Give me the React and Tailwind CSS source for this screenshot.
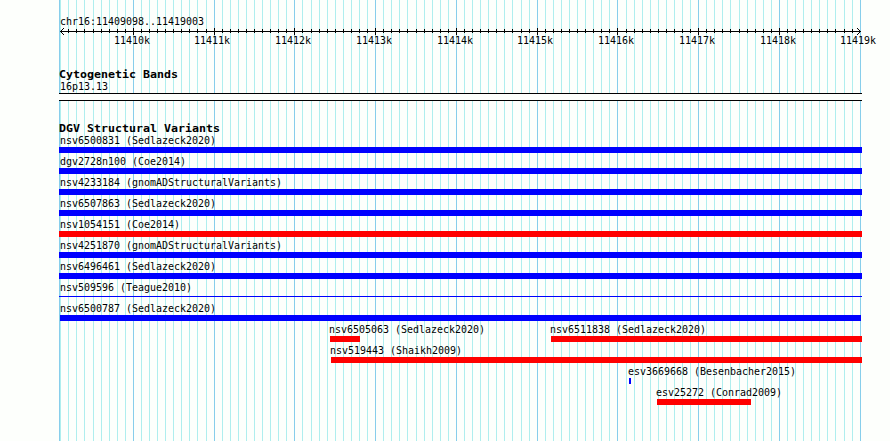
const MONO = 'font-["DejaVu_Sans_Mono","Liberation_Mono",monospace]';

const majors = Array.from({ length: 10 }, (_, k) => ({
  x: Math.round(132.885 + 80.757 * k),
  label: `${11410 + k}k`,
}));

const minors = Array.from({ length: 100 }, (_, i) => i - 9)
  .filter((i) => i % 10 !== 0 && i < 90)
  .map((i) => Math.round(132.885 + 8.0757 * i));

function Label({ children, bold = false, className = "" }) {
  return (
    <span
      className={`block origin-left whitespace-pre text-[11px] leading-[13px] text-black ${MONO} ${
        bold ? "scale-x-[1.057] font-bold" : "scale-x-[0.906]"
      } ${className}`}
    >
      {children}
    </span>
  );
}

function Grid() {
  return (
    <svg className="absolute inset-0" width="890" height="441" shapeRendering="crispEdges" aria-hidden="true">
      {minors.map((x) => (
        <rect key={x} x={x} y="0" width="1" height="441" fill="#afeeee" />
      ))}
      {majors.map(({ x }) => (
        <rect key={x} x={x} y="0" width="1" height="441" fill="#87ceeb" />
      ))}
      <rect x="59" y="0" width="1" height="441" fill="#87ceeb" />
    </svg>
  );
}

function Axis() {
  return (
    <svg className="block h-[9px] w-[890px]" viewBox="0 0 890 9" shapeRendering="crispEdges" aria-hidden="true">
      <rect x="60" y="4" width="801" height="1" />
      {minors.filter((x) => x > 62).map((x) => (
        <rect key={x} x={x} y="2" width="1" height="4" />
      ))}
      {majors.map(({ x }, i) => i < 9 && <rect key={x} x={x} y="1" width="1" height="7" />)}
      {[1, 2, 3].map((d) => (
        <g key={d}>
          <rect x={60 + d} y={4 - d} width="1" height="1" />
          <rect x={60 + d} y={4 + d} width="1" height="1" />
          <rect x={860 - d} y={4 - d} width="1" height="1" />
          <rect x={860 - d} y={4 + d} width="1" height="1" />
        </g>
      ))}
    </svg>
  );
}

const rows = [
  [{ name: "nsv6500831 (Sedlazeck2020)", text: "pl-[60px]", bar: "ml-[59px] w-[803px] bg-[#0000ff]" }],
  [{ name: "dgv2728n100 (Coe2014)", text: "pl-[60px]", bar: "ml-[59px] w-[803px] bg-[#0000ff]" }],
  [{ name: "nsv4233184 (gnomADStructuralVariants)", text: "pl-[60px]", bar: "ml-[59px] w-[803px] bg-[#0000ff]" }],
  [{ name: "nsv6507863 (Sedlazeck2020)", text: "pl-[60px]", bar: "ml-[59px] w-[803px] bg-[#0000ff]" }],
  [{ name: "nsv1054151 (Coe2014)", text: "pl-[60px]", bar: "ml-[59px] w-[803px] bg-[#ff0000]" }],
  [{ name: "nsv4251870 (gnomADStructuralVariants)", text: "pl-[60px]", bar: "ml-[59px] w-[803px] bg-[#0000ff]" }],
  [{ name: "nsv6496461 (Sedlazeck2020)", text: "pl-[60px]", bar: "ml-[59px] w-[803px] bg-[#0000ff]" }],
  [{ name: "nsv509596 (Teague2010)", text: "pl-[60px]", bar: "ml-[59px] w-[803px] bg-[#0000ff]", thin: true }],
  [{ name: "nsv6500787 (Sedlazeck2020)", text: "pl-[60px]", bar: "ml-[60px] w-[801px] bg-[#0000ff]" }],
  [
    { name: "nsv6505063 (Sedlazeck2020)", cell: "w-[550px]", text: "pl-[329px]", bar: "ml-[330px] w-[30px] bg-[#ff0000]" },
    { name: "nsv6511838 (Sedlazeck2020)", text: "", bar: "ml-[1px] w-[311px] bg-[#ff0000]" },
  ],
  [{ name: "nsv519443 (Shaikh2009)", text: "pl-[330px]", bar: "ml-[331px] w-[531px] bg-[#ff0000]" }],
  [{ name: "esv3669668 (Besenbacher2015)", text: "pl-[628px]", bar: "ml-[629px] w-[2px] bg-[#0000ff]" }],
  [{ name: "esv25272 (Conrad2009)", text: "pl-[656px]", bar: "ml-[657px] w-[94px] bg-[#ff0000]" }],
];

function Variant({ name, cell = "", text, bar, thin }) {
  return (
    <div className={`h-[21px] shrink-0 ${cell}`}>
      <div className={`h-[13px] ${text}`}>
        <Label>{name}</Label>
      </div>
      <div className={`${bar} ${thin ? "mt-[2px] h-px" : "h-[6px]"}`} />
    </div>
  );
}

export default function App() {
  return (
    <main className="relative h-[441px] w-[890px] overflow-hidden bg-[#fdfffc]">
      <Grid />
      <div className="relative flex flex-col">
        <header className="pt-[15px]">
          <div className="h-[12px] pl-[60px]">
            <Label>chr16:11409098..11419003</Label>
          </div>
          <Axis />
          <div className="-mt-[2px] flex h-[14px] pl-[93px]">
            {majors.map(({ x, label }, i) => (
              <div
                key={label}
                className="flex shrink-0 justify-center"
                style={{ width: i < 9 ? majors[i + 1].x - x : 80 }}
              >
                <Label className="origin-center">{label}</Label>
              </div>
            ))}
          </div>
        </header>
        <section className="pt-[20px]">
          <div className="h-[12px] pl-[59px]">
            <Label bold>Cytogenetic Bands</Label>
          </div>
          <div className="h-[13px] pl-[60px]">
            <Label>16p13.13</Label>
          </div>
          <div className="ml-[59px] h-[8px] w-[803px] border-y border-black bg-[#fdfffc]" />
        </section>
        <section className="pt-[21px]">
          <div className="h-[12px] pl-[59px]">
            <Label bold>DGV Structural Variants</Label>
          </div>
          {rows.map((row) => (
            <div key={row[0].name} className="flex">
              {row.map((variant) => (
                <Variant key={variant.name} {...variant} />
              ))}
            </div>
          ))}
        </section>
      </div>
    </main>
  );
}
